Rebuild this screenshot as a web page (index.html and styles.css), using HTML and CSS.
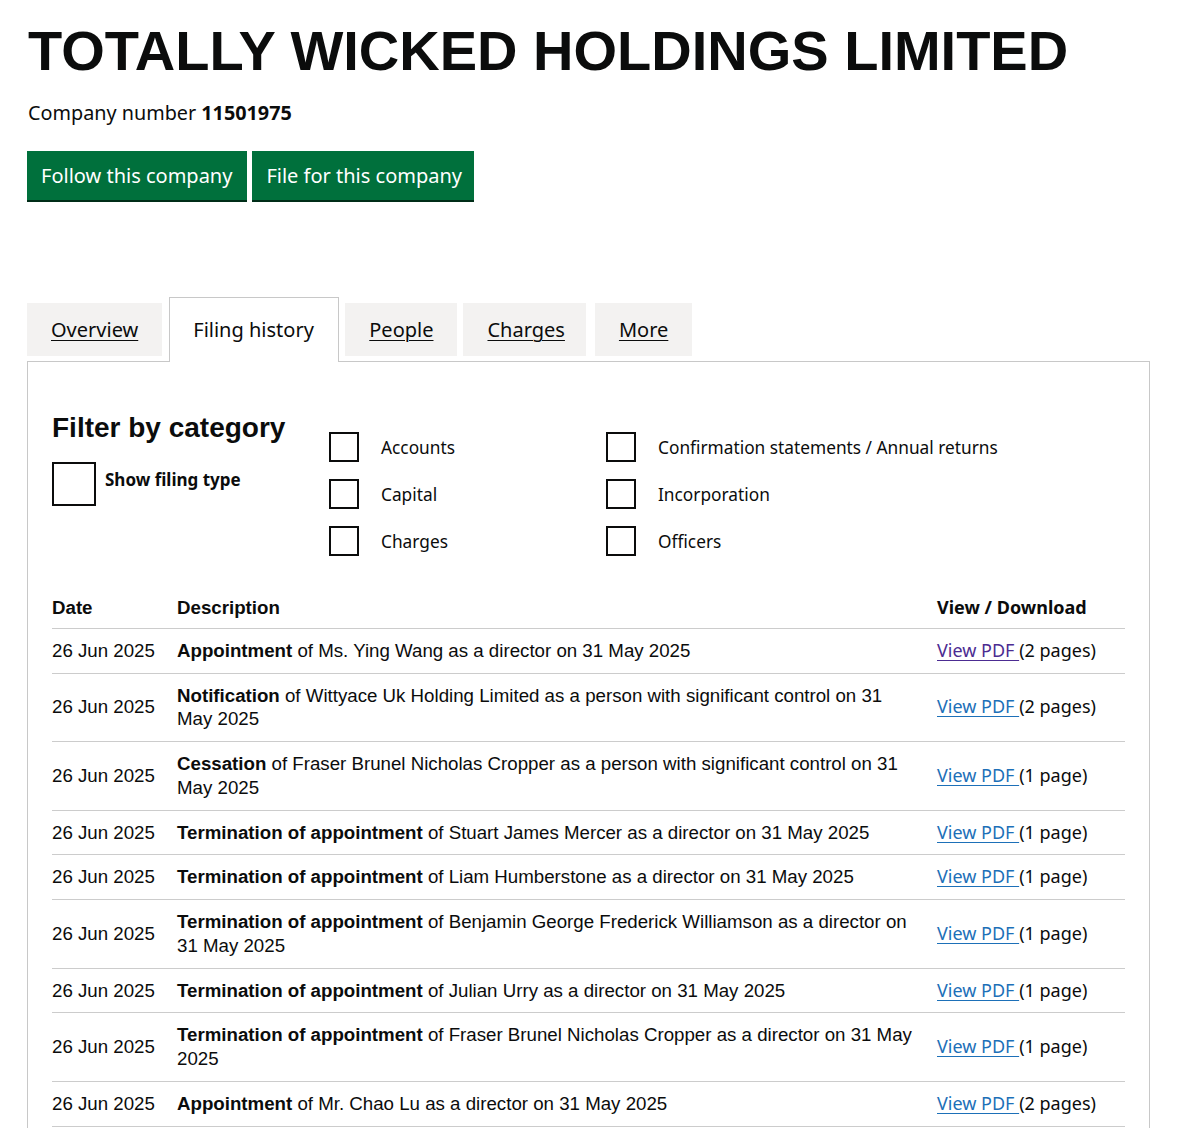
FILE: index.html
```html
<!DOCTYPE html>
<html lang="en">
<head>
<meta charset="utf-8">
<title>TOTALLY WICKED HOLDINGS LIMITED - Filing history</title>
<link rel="stylesheet" href="styles.css">
</head>
<body>
<main class="page">
  <h1 class="company-name">TOTALLY WICKED HOLDINGS LIMITED</h1>
  <p class="company-number">Company number <strong>11501975</strong></p>
  <div class="actions">
    <a class="button button-follow" href="#">Follow this company</a>
    <a class="button button-file" href="#">File for this company</a>
  </div>

  <div class="tabs">
    <ul class="tab-list">
      <li class="tab"><a href="#">Overview</a></li>
      <li class="tab tab-selected"><span>Filing history</span></li>
      <li class="tab"><a href="#">People</a></li>
      <li class="tab tab-charges"><a href="#">Charges</a></li>
      <li class="tab tab-more"><a href="#">More</a></li>
    </ul>

    <section class="panel">
      <div class="filters">
        <div class="filter-intro">
          <h2 class="filter-title">Filter by category</h2>
          <label class="check check-large"><span class="box"></span><span class="check-label">Show filing type</span></label>
        </div>
        <div class="filter-col">
          <label class="check"><span class="box"></span><span class="check-label">Accounts</span></label>
          <label class="check"><span class="box"></span><span class="check-label">Capital</span></label>
          <label class="check"><span class="box"></span><span class="check-label">Charges</span></label>
        </div>
        <div class="filter-col">
          <label class="check"><span class="box"></span><span class="check-label">Confirmation statements / Annual returns</span></label>
          <label class="check"><span class="box"></span><span class="check-label">Incorporation</span></label>
          <label class="check"><span class="box"></span><span class="check-label">Officers</span></label>
        </div>
      </div>

      <table class="filings">
        <colgroup>
          <col class="col-date">
          <col class="col-desc">
          <col class="col-view">
        </colgroup>
        <thead>
          <tr>
            <th class="th-date">Date</th>
            <th class="th-desc">Description</th>
            <th class="th-view">View / Download</th>
          </tr>
        </thead>
        <tbody>
          <tr>
            <td>26 Jun 2025</td>
            <td><strong>Appointment</strong> of Ms. Ying Wang as a director on 31 May 2025</td>
            <td class="view"><a class="pdf visited" href="#">View PDF </a>(2 pages)</td>
          </tr>
          <tr>
            <td>26 Jun 2025</td>
            <td><strong>Notification</strong> of Wittyace Uk Holding Limited as a person with significant control on 31 May 2025</td>
            <td class="view"><a class="pdf" href="#">View PDF </a>(2 pages)</td>
          </tr>
          <tr>
            <td>26 Jun 2025</td>
            <td><strong>Cessation</strong> of Fraser Brunel Nicholas Cropper as a person with significant control on 31 May 2025</td>
            <td class="view"><a class="pdf" href="#">View PDF </a>(1 page)</td>
          </tr>
          <tr>
            <td>26 Jun 2025</td>
            <td><strong>Termination of appointment</strong> of Stuart James Mercer as a director on 31 May 2025</td>
            <td class="view"><a class="pdf" href="#">View PDF </a>(1 page)</td>
          </tr>
          <tr>
            <td>26 Jun 2025</td>
            <td><strong>Termination of appointment</strong> of Liam Humberstone as a director on 31 May 2025</td>
            <td class="view"><a class="pdf" href="#">View PDF </a>(1 page)</td>
          </tr>
          <tr>
            <td>26 Jun 2025</td>
            <td><strong>Termination of appointment</strong> of Benjamin George Frederick Williamson as a director on 31 May 2025</td>
            <td class="view"><a class="pdf" href="#">View PDF </a>(1 page)</td>
          </tr>
          <tr>
            <td>26 Jun 2025</td>
            <td><strong>Termination of appointment</strong> of Julian Urry as a director on 31 May 2025</td>
            <td class="view"><a class="pdf" href="#">View PDF </a>(1 page)</td>
          </tr>
          <tr>
            <td>26 Jun 2025</td>
            <td><strong>Termination of appointment</strong> of Fraser Brunel Nicholas Cropper as a director on 31 May 2025</td>
            <td class="view"><a class="pdf" href="#">View PDF </a>(1 page)</td>
          </tr>
          <tr>
            <td>26 Jun 2025</td>
            <td><strong>Appointment</strong> of Mr. Chao Lu as a director on 31 May 2025</td>
            <td class="view"><a class="pdf" href="#">View PDF </a>(2 pages)</td>
          </tr>
        </tbody>
      </table>
    </section>
  </div>
</main>
</body>
</html>
```

FILE: styles.css
```css
html, body {
  margin: 0;
  padding: 0;
  background: #ffffff;
}

body {
  font-family: "Noto Sans", "Open Sans", sans-serif;
  color: #0b0c0c;
}

.page {
  padding-left: 27px;
  width: 1123px;
}

.company-name {
  font-family: "Liberation Sans", Arial, sans-serif;
  font-weight: 700;
  font-size: 56px;
  line-height: 1;
  margin: 23px 0 0 1px;
}

.company-number {
  font-size: 19.8px;
  line-height: 24px;
  margin: 22px 0 0 1px;
}

.company-number strong {
  font-weight: 700;
}

.actions {
  display: flex;
  gap: 5px;
  margin-top: 26px;
}

.button {
  display: block;
  height: 49px;
  line-height: 49px;
  padding: 0 14px;
  background: #00703c;
  color: #ffffff;
  font-size: 20px;
  text-decoration: none;
  box-shadow: 0 2px 0 #002d18;
}

.button-follow {
  padding: 0 15px 0 14px;
}

.button-file {
  padding: 0 12px 0 14px;
}

.tabs {
  margin-top: 97px;
}

.tab-list {
  list-style: none;
  margin: 0;
  padding: 0;
  display: flex;
  align-items: flex-start;
  height: 64px;
  position: relative;
  z-index: 1;
}

.tab {
  margin-top: 6px;
  margin-right: 6px;
  height: 53px;
  background: #f3f2f1;
  font-size: 20px;
  display: flex;
  align-items: center;
  padding: 0 24px;
}

.tab:first-child {
  margin-right: 7px;
}

.tab-charges {
  padding: 0 21px 0 24px;
  margin-right: 9px;
}

.tab a {
  color: #0b0c0c;
  text-decoration: underline;
  text-decoration-thickness: 1px;
  text-underline-offset: 3px;
}

.tab-selected {
  margin-top: 0;
  padding: 0 23px 1px;
  background: #ffffff;
  border: 1px solid #c8c8c8;
  border-bottom: 0;
  box-sizing: border-box;
  height: 65px;
  width: 170px;
}

.panel {
  border: 1px solid #c8c8c8;
  padding: 49px 24px 24px 24px;
}

.filters {
  display: grid;
  grid-template-columns: 277px 277px 1fr;
  height: 176px;
}

.filter-title {
  font-family: "Liberation Sans", Arial, sans-serif;
  font-weight: 700;
  font-size: 28px;
  line-height: 34px;
  margin: 0;
}

.check {
  display: flex;
  align-items: center;
  height: 30px;
  margin-bottom: 17px;
  font-size: 17.3px;
}

.box {
  box-sizing: border-box;
  width: 30px;
  height: 30px;
  border: 2px solid #0b0c0c;
  flex: none;
  background: #fff;
}

.check-label {
  margin-left: 22px;
}

.filter-col {
  padding-top: 21px;
}

.check-large {
  margin-top: 17px;
  height: 44px;
  align-items: flex-start;
}

.check-large .box {
  width: 44px;
  height: 44px;
}

.check-large .check-label {
  margin-left: 9px;
  padding-top: 6px;
  font-weight: 700;
  font-size: 17px;
}

.filings {
  width: 1073px;
  border-collapse: collapse;
  table-layout: fixed;
  font-family: "Liberation Sans", Arial, sans-serif;
  font-size: 18.7px;
  line-height: 23.75px;
}

.col-date { width: 125px; }
.col-desc { width: 760px; }
.col-view { width: 188px; }

.filings th,
.filings td {
  text-align: left;
  vertical-align: middle;
  padding: 10px 20px 10px 0;
  border-bottom: 1px solid #cccccc;
}

.filings th {
  font-weight: 700;
  padding-top: 9px;
  padding-bottom: 8px;
}

.filings td strong {
  font-weight: 700;
}

.filings .th-view {
  font-family: "Noto Sans", "Open Sans", sans-serif;
  font-size: 18px;
  padding-right: 0;
}

.filings td.view {
  font-family: "Noto Sans", "Open Sans", sans-serif;
  font-size: 18px;
  padding-right: 0;
  white-space: nowrap;
}

.pdf {
  color: #1d70b8;
  text-decoration: underline;
  text-decoration-thickness: 1px;
  text-underline-offset: 3px;
  white-space: pre;
}

.pdf.visited {
  color: #4c2c92;
}
```
